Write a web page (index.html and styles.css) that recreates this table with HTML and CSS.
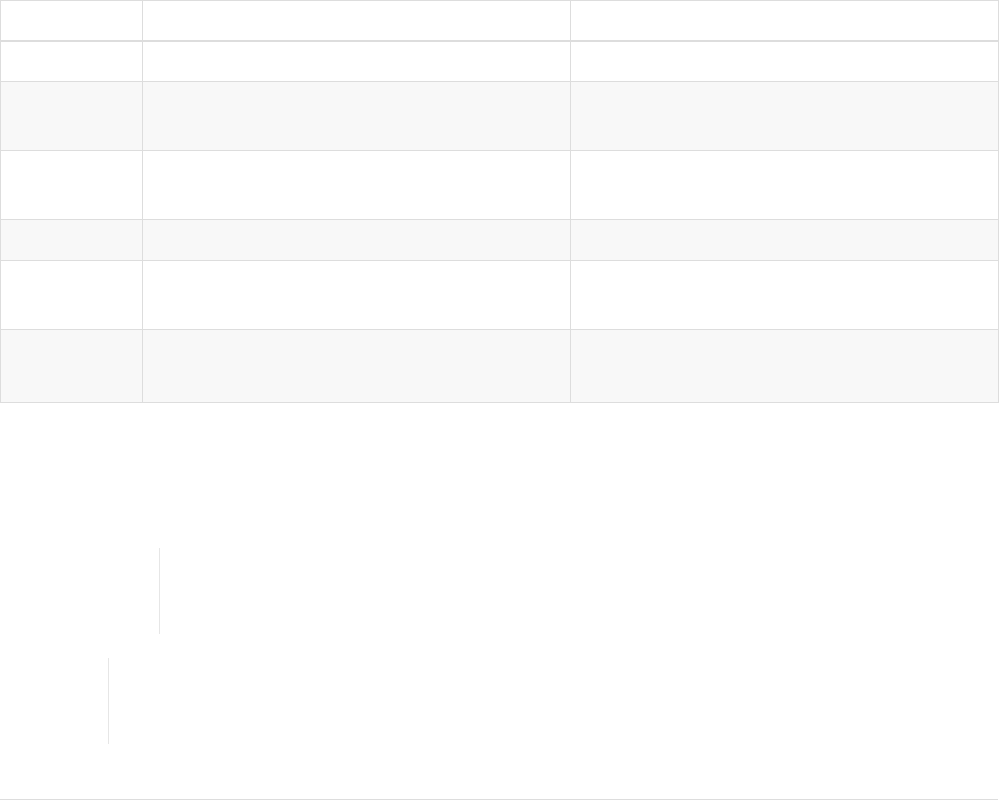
FILE: index.html
```html
<!doctype html>
<html lang="en">
<head>
<meta charset="utf-8">
<title>table</title>
<link rel="stylesheet" href="styles.css">
</head>
<body>
<table class="grid">
  <colgroup>
    <col class="c1">
    <col class="c2">
    <col class="c3">
  </colgroup>
  <thead>
    <tr class="head"><th></th><th></th><th></th></tr>
  </thead>
  <tbody>
    <tr class="short"><td></td><td></td><td></td></tr>
    <tr class="tall odd"><td></td><td></td><td></td></tr>
    <tr class="tall"><td></td><td></td><td></td></tr>
    <tr class="short odd"><td></td><td></td><td></td></tr>
    <tr class="tall"><td></td><td></td><td></td></tr>
    <tr class="taller odd"><td></td><td></td><td></td></tr>
  </tbody>
</table>

<div class="notes">
  <div class="quote first"></div>
  <div class="quote second"></div>
</div>

<div class="rule"></div>
</body>
</html>
```

FILE: styles.css
```css
html, body {
  margin: 0;
  padding: 0;
  background: white;
  font-family: 'Liberation Sans', sans-serif;
  font-size: 14px;
}

* {
  box-sizing: border-box;
}

.grid {
  border-collapse: collapse;
  width: 998px;
  table-layout: fixed;
}

.grid .c1 { width: 142px; }
.grid .c2 { width: 428px; }
.grid .c3 { width: 428px; }

.grid th,
.grid td {
  border: 1px solid #ddd;
  padding: 0;
}

.grid .head th {
  border-bottom-width: 2px;
  height: 40px;
}

.grid .short td { height: 41px; }
.grid .tall td { height: 69px; }
.grid .taller td { height: 73px; }

.grid .odd td {
  background: #f8f8f8;
}

.notes {
  height: 396px;
  padding-top: 145px;
}

.quote {
  border-left: 1px solid #e6e6e6;
  height: 86px;
}

.quote.first {
  margin-left: 159px;
}

.quote.second {
  margin-left: 108px;
  margin-top: 24px;
}

.rule {
  width: 998px;
  border-top: 1px solid #ddd;
}
```
